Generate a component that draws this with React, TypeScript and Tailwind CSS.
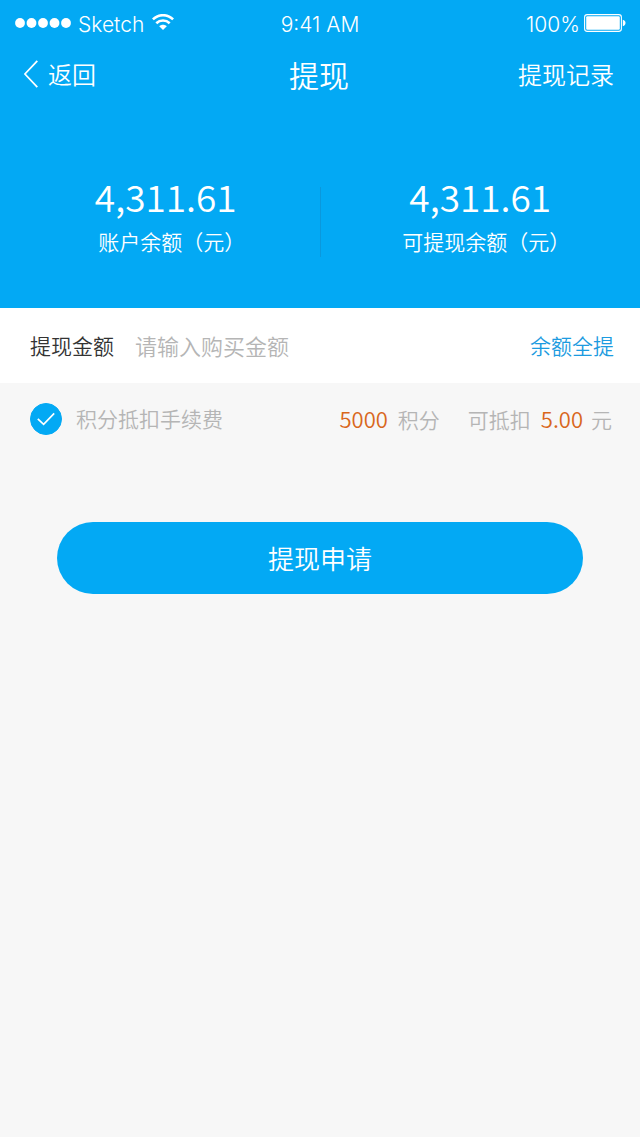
import React, { useState } from 'react';

const SignalDots: React.FC = () => (
  <svg className="mb-[2px] w-[58px] h-3" viewBox="0 0 58 12" fill="currentColor" aria-hidden="true">
    {[6, 17.5, 29, 40.5, 52].map((cx) => (
      <circle key={cx} cx={cx} cy="5" r="4.9" />
    ))}
  </svg>
);

const WifiIcon: React.FC = () => (
  <svg className="ml-[2px] mb-[6px] w-[22px] h-4" viewBox="0 0 22 16" fill="none" stroke="currentColor" strokeWidth="2.6" aria-hidden="true">
    <path d="M0.9 5.4C6.6 -0.2 15.4 -0.2 21.1 5.4" />
    <path d="M4.3 9.2C8.1 5.5 13.9 5.5 17.7 9.2" />
    <path d="M11 16L7.2 12.2C9.3 10.2 12.7 10.2 14.8 12.2Z" fill="currentColor" stroke="none" />
  </svg>
);

const BatteryIcon: React.FC = () => (
  <svg className="mb-1 w-[42px] h-[18px]" viewBox="0 0 42 18" aria-hidden="true">
    <rect x="0.6" y="0.6" width="36.8" height="16.8" rx="2.6" fill="none" stroke="currentColor" strokeWidth="1.1" />
    <rect x="2.2" y="2.2" width="33.6" height="13.6" rx="1.2" fill="currentColor" />
    <path d="M38.8 5.8C40.6 6.2 41.5 7.4 41.5 9C41.5 10.6 40.6 11.8 38.8 12.2Z" fill="currentColor" />
  </svg>
);

const StatusBar: React.FC = () => (
  <div className="grid grid-cols-3 items-center h-12 pt-[2px] px-[14px] font-['Inter','Liberation_Sans',sans-serif] text-[21px] leading-6">
    <div className="flex items-center gap-[6px]">
      <SignalDots />
      <span>Sketch</span>
      <WifiIcon />
    </div>
    <span className="text-center">9:41 AM</span>
    <div className="flex items-center justify-end gap-1">
      <span>100%</span>
      <BatteryIcon />
    </div>
  </div>
);

interface BalanceProps {
  amount: string;
  label: string;
  className?: string;
}

const Balance: React.FC<BalanceProps> = ({ amount, label, className }) => (
  <div className={`w-1/2 flex flex-col items-center ${className ?? ''}`}>
    <span className="text-[37px] leading-10">{amount}</span>
    <span className="mt-[9px] pl-3 text-[21px] leading-8 whitespace-nowrap">{label}</span>
  </div>
);

const App: React.FC = () => {
  const [amount, setAmount] = useState('');
  const [usePoints, setUsePoints] = useState(true);

  return (
    <div className="min-h-screen bg-[#f7f7f7] font-['Noto_Sans_CJK_SC',sans-serif] font-[350]">
      <header className="bg-[#03a9f4] text-white">
        <StatusBar />
        <nav className="grid grid-cols-3 items-center h-[54px] pb-[2px] pl-6 pr-[26px]">
          <button type="button" className="flex items-center gap-[10px] text-[24px] leading-8">
            <svg className="w-[14px] h-7" viewBox="0 0 14 28" fill="none" stroke="currentColor" strokeWidth="1.8" aria-hidden="true">
              <path d="M13.3 0.8L0.9 14L13.3 27.2" />
            </svg>
            返回
          </button>
          <h1 className="text-center text-[30px] leading-10">提现</h1>
          <a href="#records" className="justify-self-end text-[24px] leading-8">提现记录</a>
        </nav>

        <section className="flex pt-[74px] pb-[51px]">
          <Balance amount="4,311.61" label="账户余额（元）" className="pl-3" />
          <div className="w-px h-[70px] mt-[11px] bg-[#0b98dc]" />
          <Balance amount="4,311.61" label="可提现余额（元）" />
        </section>
      </header>

      <main>
        <div className="flex items-center h-[75px] pl-[30px] pr-[26px] bg-white">
          <label htmlFor="amount" className="text-[21px] text-[#333333]">提现金额</label>
          <input
            id="amount"
            type="text"
            inputMode="decimal"
            value={amount}
            onChange={(e) => setAmount(e.target.value)}
            placeholder="请输入购买金额"
            className="flex-1 min-w-0 ml-[21px] text-[22px] text-[#333333] placeholder:text-[#b5b5b5] outline-none"
          />
          <button type="button" onClick={() => setAmount('4311.61')} className="text-[21px] text-[#1c9be0]">
            余额全提
          </button>
        </div>

        <div className="flex items-center justify-between h-[74px] pb-[2px] pl-[30px] pr-7 text-[21px] text-[#b5b5b5]">
          <label className="flex items-center gap-[14px]">
            <span className="grid place-items-center">
              <input
                type="checkbox"
                checked={usePoints}
                onChange={(e) => setUsePoints(e.target.checked)}
                className="col-start-1 row-start-1 appearance-none size-8 rounded-full border border-[#b5b5b5] checked:border-[#03a9f4] checked:bg-[#03a9f4]"
              />
              <svg className="col-start-1 row-start-1 w-[18px] h-[14px] pointer-events-none" viewBox="0 0 18 14" fill="none" stroke="white" strokeWidth="1.7" aria-hidden="true">
                <path d="M0.8 6.8L6.6 12.4L17.2 1.4" />
              </svg>
            </span>
            积分抵扣手续费
          </label>
          <div className="flex items-baseline">
            <span className="text-[22px] leading-8 text-[#d9671c]">5000</span>
            <span className="ml-[10px]">积分</span>
            <span className="ml-7">可抵扣</span>
            <span className="ml-[10px] text-[22px] leading-8 text-[#d9671c]">5.00</span>
            <span className="ml-2">元</span>
          </div>
        </div>

        <div className="px-[57px] pt-[65px]">
          <button type="button" className="w-full h-[72px] pb-[2px] rounded-full bg-[#03a9f4] text-white text-[26px]">
            提现申请
          </button>
        </div>
      </main>
    </div>
  );
};

export default App;
